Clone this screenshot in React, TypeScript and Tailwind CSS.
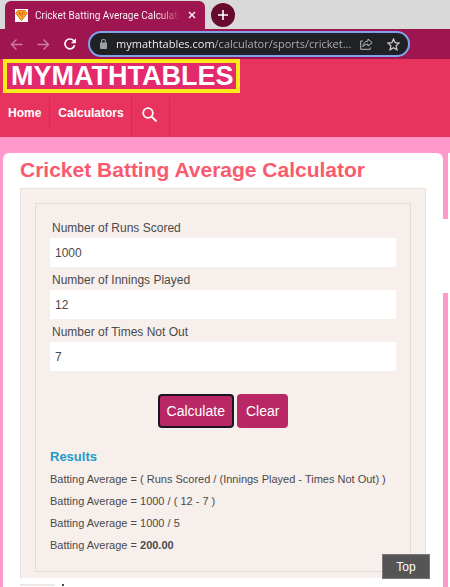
import { useState, type FormEvent } from 'react'

const FIELDS = [
  { id: 'runs', label: 'Number of Runs Scored' },
  { id: 'innings', label: 'Number of Innings Played' },
  { id: 'notOut', label: 'Number of Times Not Out' },
] as const

type Values = Record<(typeof FIELDS)[number]['id'], string>

const buttonClass = 'h-[34px] rounded-sm border-2 bg-[#b92864] px-[7px] text-[14px] text-white'

function Favicon() {
  return (
    <svg width="13" height="13" viewBox="0 0 13 13" aria-hidden="true">
      <rect width="13" height="13" fill="#fff" />
      <path d="M2.8 1.6h7.4l2 2.8-5.7 7.2L.8 4.4z" fill="#f8b81c" stroke="#e06a28" strokeWidth="1" />
      <path d="M5.6 3.5H3.8v1.6h1.8v1.7M7.2 8.500v-5h2v2.200" fill="none" stroke="#d8452a" strokeWidth=".8" />
    </svg>
  )
}

function TabStrip() {
  return (
    <div className="flex h-[29px] items-end bg-[#d9d9d9] pl-[5px]">
      <div className="flex h-7 w-[200px] items-center rounded-t-md bg-[#9f154f] pl-[10px] pr-[9px] text-white">
        <Favicon />
        <span className="ml-[7px] whitespace-nowrap bg-linear-to-r from-white from-85% to-[#9f154f] bg-clip-text font-[Roboto,sans-serif] text-[10px] text-transparent">
          Cricket Batting Average Calculati
        </span>
        <button type="button" aria-label="Close tab" className="ml-auto">
          <svg width="8" height="8" viewBox="0 0 8 8" stroke="#fff" strokeWidth="1.3">
            <path d="M1 1l6 6M7 1L1 7" />
          </svg>
        </button>
      </div>
      <button
        type="button"
        aria-label="New tab"
        className="mb-[2px] ml-[6px] flex size-6 items-center justify-center rounded-full bg-[#68092f]"
      >
        <svg width="12" height="12" viewBox="0 0 12 12" stroke="#fff" strokeWidth="1.6">
          <path d="M6 1v10M1 6h10" />
        </svg>
      </button>
    </div>
  )
}

function Toolbar() {
  return (
    <div className="flex h-[30px] items-center bg-[#9f154f] pl-[10px]">
      <button type="button" aria-label="Back">
        <svg width="13" height="13" viewBox="0 0 13 13" fill="none" stroke="#cb7d9e" strokeWidth="1.4">
          <path d="M12.5 6.5H1.5M6.5 1.5l-5 5 5 5" />
        </svg>
      </button>
      <button type="button" aria-label="Forward" className="ml-[14px]">
        <svg width="13" height="13" viewBox="0 0 13 13" fill="none" stroke="#cb7d9e" strokeWidth="1.4">
          <path d="M.5 6.5h11M6.5 1.5l5 5-5 5" />
        </svg>
      </button>
      <button type="button" aria-label="Reload" className="ml-[14px]">
        <svg width="12" height="12" viewBox="0 0 12 12" fill="none" stroke="#fff" strokeWidth="1.7">
          <path d="M10.6 7.3A4.9 4.9 0 1 1 9.7 2.8" />
          <path d="M11.9.2v5H7z" fill="#fff" stroke="none" />
        </svg>
      </button>
      <div className="ml-3 mr-10 flex h-[26px] min-w-0 flex-1 items-center rounded-full border-2 border-[#7ea3ea] bg-[#202125] pl-[10px] pr-2">
        <svg width="7" height="10" viewBox="0 0 7 10" aria-hidden="true">
          <rect y="3.5" width="7" height="6.5" rx=".7" fill="#9aa0a6" />
          <path d="M1.5 4V2.5a2 2 0 0 1 4 0V4" fill="none" stroke="#9aa0a6" strokeWidth="1.1" />
        </svg>
        {/* host in white, path dimmed */}
        <input
          aria-label="Address"
          defaultValue="mymathtables.com/calculator/sports/cricket..."
          className="ml-[9px] min-w-0 flex-1 bg-[linear-gradient(to_right,#fff_99px,#b4b5b8_99px)] bg-clip-text text-[11px] text-transparent outline-none"
        />
        <button type="button" aria-label="Share" className="ml-1">
          <svg width="13" height="12" viewBox="0 0 13 12" fill="none" stroke="#b8babd" strokeWidth="1">
            <path d="M3 3H.7v8.3h9.6V9.5" />
            <path d="M8 1l4.2 3.6L8 8.1V6.2C5.6 6.2 4 7 2.8 8.7 3.1 5.6 4.9 3.4 8 3z" />
          </svg>
        </button>
        <button type="button" aria-label="Bookmark" className="ml-[14px]">
          <svg width="13" height="13" viewBox="0 0 13 13" fill="none" stroke="#cfd0d2" strokeWidth="1.2">
            <path d="M6.5 1l1.6 3.7 4 .4-3 2.7.9 4-3.5-2.1L3 11.8l.9-4-3-2.7 4-.4z" />
          </svg>
        </button>
      </div>
    </div>
  )
}

function SiteHeader() {
  return (
    <header className="bg-[#e8335f] text-white">
      <a
        href="#"
        className="ml-[3px] inline-block h-[34px] border-4 border-[#fdea1b] bg-[#e22a6c] pl-1 pr-[3px] align-top text-[27px] leading-[26px] font-bold"
      >
        MYMATHTABLES
      </a>
      <nav className="mt-1 flex h-10 items-start text-[12px] font-bold">
        <a href="#" className="h-8 border-r border-[#d12c56] px-2 leading-8">
          Home
        </a>
        <a href="#" className="h-10 border-r border-[#d12c56] pl-2 pr-[7px] leading-8">
          Calculators
        </a>
        <button
          type="button"
          aria-label="Search"
          className="flex h-10 w-[38px] justify-center border-r border-[#d12c56] pt-[10px]"
        >
          <svg width="16" height="16" viewBox="0 0 16 16" fill="none" stroke="#fff" strokeWidth="1.8">
            <circle cx="6" cy="6" r="4.8" />
            <path d="M9.5 9.5l5 5" />
          </svg>
        </button>
      </nav>
    </header>
  )
}

function Results({ values }: { values: Values }) {
  const outs = Number(values.innings) - Number(values.notOut)
  const average = outs > 0 ? (Number(values.runs) / outs).toFixed(2) : '-'

  return (
    <section className="mt-[18px] text-[11px] leading-[22px]">
      <h2 className="text-[13px] font-bold text-[#2299c9]">Results</h2>
      <p>Batting Average = ( Runs Scored / (Innings Played - Times Not Out) )</p>
      <p>
        Batting Average = {values.runs} / ( {values.innings} - {values.notOut} )
      </p>
      <p>
        Batting Average = {values.runs} / {outs}
      </p>
      <p>
        Batting Average = <b>{average}</b>
      </p>
    </section>
  )
}

export default function App() {
  const [values, setValues] = useState<Values>({ runs: '1000', innings: '12', notOut: '7' })
  const [submitted, setSubmitted] = useState<Values | null>(values)

  const calculate = (e: FormEvent) => {
    e.preventDefault()
    setSubmitted(values)
  }

  const clear = () => {
    setValues({ runs: '', innings: '', notOut: '' })
    setSubmitted(null)
  }

  return (
    <div className="flex min-h-screen flex-col bg-[#ff99cc] font-['Liberation_Sans',Arial,sans-serif] text-[#4a4a4a]">
      <div className="font-['Open_Sans','Noto_Sans',sans-serif]">
        <TabStrip />
        <Toolbar />
      </div>
      <SiteHeader />

      <div className="flex flex-1 pl-[3px] pt-4">
        <main className="min-w-0 flex-1 rounded-t-md bg-white px-[17px]">
          <h1 className="h-[35px] whitespace-nowrap text-[21px] leading-[34px] font-bold text-[#fa5a6e]">
            Cricket Batting Average Calculator
          </h1>
          <div className="border border-b-0 border-[#e9dfdd] bg-[#f7efec] px-[14px] pb-[6px] pt-[14px]">
            <form onSubmit={calculate} className="border border-[#e6dbd9] px-[14px] pb-[15px] pt-[14px]">
              {FIELDS.map((field) => (
                <div key={field.id} className="mb-[3px]">
                  <label htmlFor={field.id} className="block pl-[2px] text-[12px] leading-5">
                    {field.label}
                  </label>
                  <input
                    id={field.id}
                    value={values[field.id]}
                    onChange={(e) => setValues({ ...values, [field.id]: e.target.value })}
                    className="block h-[29px] w-full bg-white px-[5px] text-[12px] outline-none"
                  />
                </div>
              ))}
              <div className="mt-[23px] flex justify-center gap-[3px]">
                <button type="submit" className={`${buttonClass} border-[#1c1420]`}>
                  Calculate
                </button>
                <button type="button" onClick={clear} className={`${buttonClass} border-[#b92864]`}>
                  Clear
                </button>
              </div>
              {submitted && <Results values={submitted} />}
            </form>
          </div>
          {/* top edge of the next block */}
          <div className="mt-[6px] flex h-[2px] gap-[7px]">
            <div className="w-[35px] bg-[#efe7e4]" />
            <div className="w-[2px] bg-[#4a4a4a]" />
          </div>
        </main>

        {/* strip between the article and the sidebar, joined by the ad slot */}
        <div className="w-[5px] pt-[66px]">
          <div className="h-[74px] bg-white" />
        </div>
        <aside className="w-[2px] bg-white" />
      </div>

      <a
        href="#"
        className="fixed bottom-[8px] right-[20px] flex h-[25px] w-12 items-center justify-center border border-[#777] bg-[#555] text-[12px] text-white"
      >
        Top
      </a>
    </div>
  )
}
